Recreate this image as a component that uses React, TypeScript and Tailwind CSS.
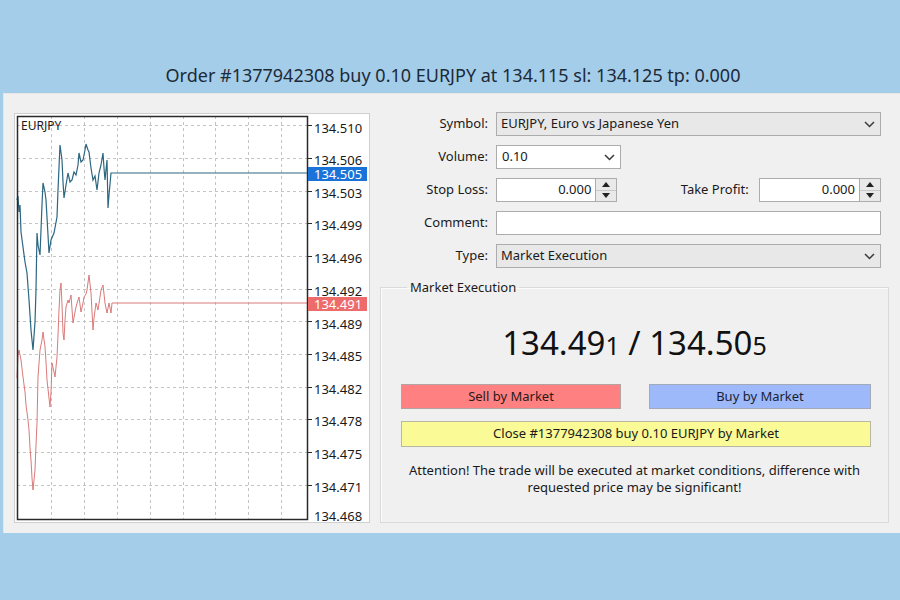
import React from 'react';

const font = { fontFamily: '"Noto Sans", "Open Sans", sans-serif' };

// chart coordinates are page coords minus the chart's white-box origin (14, 114)
const OX = 14;
const OY = 114;

const askPts: [number, number][] = [
  [16, 200], [17, 196], [18, 212], [19, 205], [20, 232], [22, 247], [24, 262], [26, 273],
  [28, 300], [30, 330], [32, 350], [34, 322], [35, 290], [36, 233], [37, 245], [39, 255],
  [41, 205], [42, 183], [44, 192], [45, 200], [47, 235], [48, 253], [50, 240], [53, 233],
  [56, 217], [57, 190], [59, 145], [61, 160], [62, 182], [63, 198], [65, 185], [67, 173],
  [69, 182], [71, 180], [73, 172], [75, 175], [77, 165], [78, 153], [80, 162], [82, 160],
  [84, 150], [85, 144], [87, 150], [88, 152], [90, 168], [92, 180], [94, 176], [96, 190],
  [98, 173], [100, 165], [102, 153], [103, 168], [104, 180], [105, 170], [106, 160],
  [107, 208], [108, 195], [110, 173], [306, 173],
];

const bidPts: [number, number][] = [
  [16, 378], [17, 355], [18, 350], [20, 360], [22, 377], [24, 392], [25, 405], [27, 420],
  [28, 430], [29, 448], [30, 460], [31, 478], [32, 490], [34, 470], [35, 445], [36, 423],
  [37, 377], [39, 350], [41, 340], [42, 332], [44, 347], [45, 362], [46, 380], [48, 398],
  [49, 407], [50, 392], [51, 363], [53, 372], [54, 377], [56, 357], [57, 335], [58, 310],
  [59, 290], [60, 283], [61, 305], [62, 333], [63, 340], [64, 320], [65, 307], [67, 300],
  [68, 303], [70, 295], [72, 323], [74, 312], [75, 307], [77, 300], [78, 297], [80, 312],
  [82, 303], [83, 297], [85, 294], [86, 290], [88, 275], [90, 293], [92, 330], [93, 318],
  [95, 303], [97, 310], [99, 297], [100, 290], [102, 285], [104, 303], [106, 313],
  [108, 303], [110, 313], [111, 303], [306, 303],
];

const toPoints = (pts: [number, number][]) =>
  pts.map(([x, y]) => `${x - OX},${y - OY}`).join(' ');

const gridY = [125, 158, 191, 223, 256, 289, 321, 354, 387, 419, 452, 485];
const gridX = [50, 83, 116, 149, 182, 214, 247, 280];

const labels: [string, number][] = [
  ['134.510', 128], ['134.506', 160], ['134.503', 193], ['134.499', 225],
  ['134.496', 258], ['134.492', 291], ['134.489', 324], ['134.485', 356],
  ['134.482', 389], ['134.478', 421], ['134.475', 454], ['134.471', 487],
  ['134.468', 516],
];

function Chart() {
  return (
    <div className="ml-[10px] mt-[19px] h-[410px] w-[356px] shrink-0 border border-[#cfcfcf] bg-white">
      <svg width="354" height="408" viewBox="0 0 354 408" style={font}>
        {gridY.map((y) => (
          <line key={'h' + y} x1={2} x2={292} y1={y - OY + 0.5} y2={y - OY + 0.5} stroke="#c4c4c4" strokeDasharray="3 3" />
        ))}
        {gridX.map((x) => (
          <line key={'v' + x} x1={x - OX + 0.5} x2={x - OX + 0.5} y1={2} y2={405} stroke="#c4c4c4" strokeDasharray="3 3" />
        ))}
        <polyline points={toPoints(bidPts)} fill="none" stroke="#d97a7a" strokeWidth="1" />
        <polyline points={toPoints(askPts)} fill="none" stroke="#2c6680" strokeWidth="1.2" />
        <rect x={2.5} y={2.5} width={290} height={403} fill="none" stroke="#2a2a2a" strokeWidth="1.5" />
        {gridY.map((y) => (
          <line key={'t' + y} x1={292} x2={297} y1={y - OY + 0.5} y2={y - OY + 0.5} stroke="#2a2a2a" />
        ))}
        <text x={6} y={16} fontSize="12" fill="#1a1a1a">EURJPY</text>
        {labels.map(([t, y]) => (
          <text key={t} x={299} y={y - OY + 4.5} fontSize="13" fill="#1a1a1a">{t}</text>
        ))}
        <rect x={293} y={167 - OY} width={59} height={14} fill="#1a73d9" />
        <text x={299} y={174 - OY + 4.5} fontSize="13" fill="#ffffff">134.505</text>
        <rect x={293} y={297 - OY} width={59} height={14} fill="#ee6b6b" />
        <text x={299} y={304 - OY + 4.5} fontSize="13" fill="#ffffff">134.491</text>
      </svg>
    </div>
  );
}

function Chevron() {
  return (
    <svg width="11" height="7" viewBox="0 0 11 7" className="shrink-0">
      <path d="M1 1l4.5 4.5L10 1" fill="none" stroke="#3a3a3a" strokeWidth="1.5" />
    </svg>
  );
}

function Spinner() {
  return (
    <div className="flex h-full w-[21px] shrink-0 flex-col border border-l-0 border-[#acacac] bg-[#e9e9e9]">
      <div className="flex flex-1 items-center justify-center border-b border-[#c8c8c8]">
        <svg width="8" height="5" viewBox="0 0 8 5"><path d="M0 5L4 0L8 5Z" fill="#222" /></svg>
      </div>
      <div className="flex flex-1 items-center justify-center">
        <svg width="8" height="5" viewBox="0 0 8 5"><path d="M0 0L4 5L8 0Z" fill="#222" /></svg>
      </div>
    </div>
  );
}

function Label({ children }: { children: React.ReactNode }) {
  return <div className="w-[108px] shrink-0 text-right">{children}</div>;
}

export default function App() {
  return (
    <div className="flex h-[600px] w-[900px] flex-col overflow-hidden bg-[#a4cdea] text-[13px] text-[#1a1a1a]" style={font}>
      <div className="flex h-[93px] shrink-0 items-start justify-center pl-[6px] pt-[63px] text-[18px] leading-[24px] text-[#1c2a38]">
        Order #1377942308 buy 0.10 EURJPY at 134.115 sl: 134.125 tp: 0.000
      </div>

      <div className="ml-[3px] flex h-[440px] w-[897px] border-t border-l border-[#e6e6e6] bg-[#f0f0f0]">
        <Chart />

        <div className="ml-[10px] flex w-[510px] flex-col">
          <div className="mt-[18px] flex w-[501px] flex-col gap-[9px]">
            <div className="flex h-[24px] items-center gap-2">
              <Label>Symbol:</Label>
              <div className="flex h-full flex-1 items-center justify-between border border-[#acacac] bg-[#e8e8e8] pl-[4px] pr-[5px]">
                <span>EURJPY, Euro vs Japanese Yen</span>
                <Chevron />
              </div>
            </div>

            <div className="flex h-[24px] items-center gap-2">
              <Label>Volume:</Label>
              <div className="flex h-full w-[125px] items-center justify-between border border-[#acacac] bg-white pl-[5px] pr-[5px]">
                <span>0.10</span>
                <Chevron />
              </div>
            </div>

            <div className="flex h-[24px] items-center gap-2">
              <Label>Stop Loss:</Label>
              <div className="flex h-full w-[124px]">
                <div className="flex flex-1 items-center justify-end border border-[#acacac] bg-white pr-[4px]">0.000</div>
                <Spinner />
              </div>
              <div className="w-[126px] text-right">Take Profit:</div>
              <div className="ml-[2px] flex h-full w-[125px]">
                <div className="flex flex-1 items-center justify-end border border-[#acacac] bg-white pr-[4px]">0.000</div>
                <Spinner />
              </div>
            </div>

            <div className="flex h-[24px] items-center gap-2">
              <Label>Comment:</Label>
              <div className="h-full flex-1 border border-[#acacac] bg-white" />
            </div>

            <div className="flex h-[24px] items-center gap-2">
              <Label>Type:</Label>
              <div className="flex h-full flex-1 items-center justify-between border border-[#acacac] bg-[#e8e8e8] pl-[4px] pr-[5px]">
                <span>Market Execution</span>
                <Chevron />
              </div>
            </div>
          </div>

          <fieldset className="mt-[11px] h-[244px] w-[509px] border border-[#dadada] px-[20px] pb-0 shadow-[inset_1px_1px_0_#fbfbfb]">
            <legend className="ml-[6px] px-[3px] leading-[17px]">Market Execution</legend>
            <div className="mt-[27px] flex items-baseline justify-center text-[#111] leading-[40px]">
              <span className="text-[33px]">134.49</span>
              <span className="text-[25px]">1</span>
              <span className="text-[33px]">&nbsp;/&nbsp;</span>
              <span className="text-[33px]">134.50</span>
              <span className="text-[25px]">5</span>
            </div>
            <div className="mt-[19px] flex justify-between">
              <div className="flex h-[25px] w-[220px] items-center justify-center border border-[#b3a3a3] bg-[#ff8080] text-[#2a1a1a]">Sell by Market</div>
              <div className="mr-[-3px] flex h-[25px] w-[222px] items-center justify-center border border-[#a3a9b8] bg-[#9db9fa] text-[#1a1f33]">Buy by Market</div>
            </div>
            <div className="mr-[-3px] mt-[12px] flex h-[26px] items-center justify-center border border-[#b8b8a0] bg-[#fafa96]">
              Close #1377942308 buy 0.10 EURJPY by Market
            </div>
            <div className="mt-[15px] text-center leading-[17px]">
              Attention! The trade will be executed at market conditions, difference with
              <br />
              requested price may be significant!
            </div>
          </fieldset>
        </div>
      </div>
    </div>
  );
}
